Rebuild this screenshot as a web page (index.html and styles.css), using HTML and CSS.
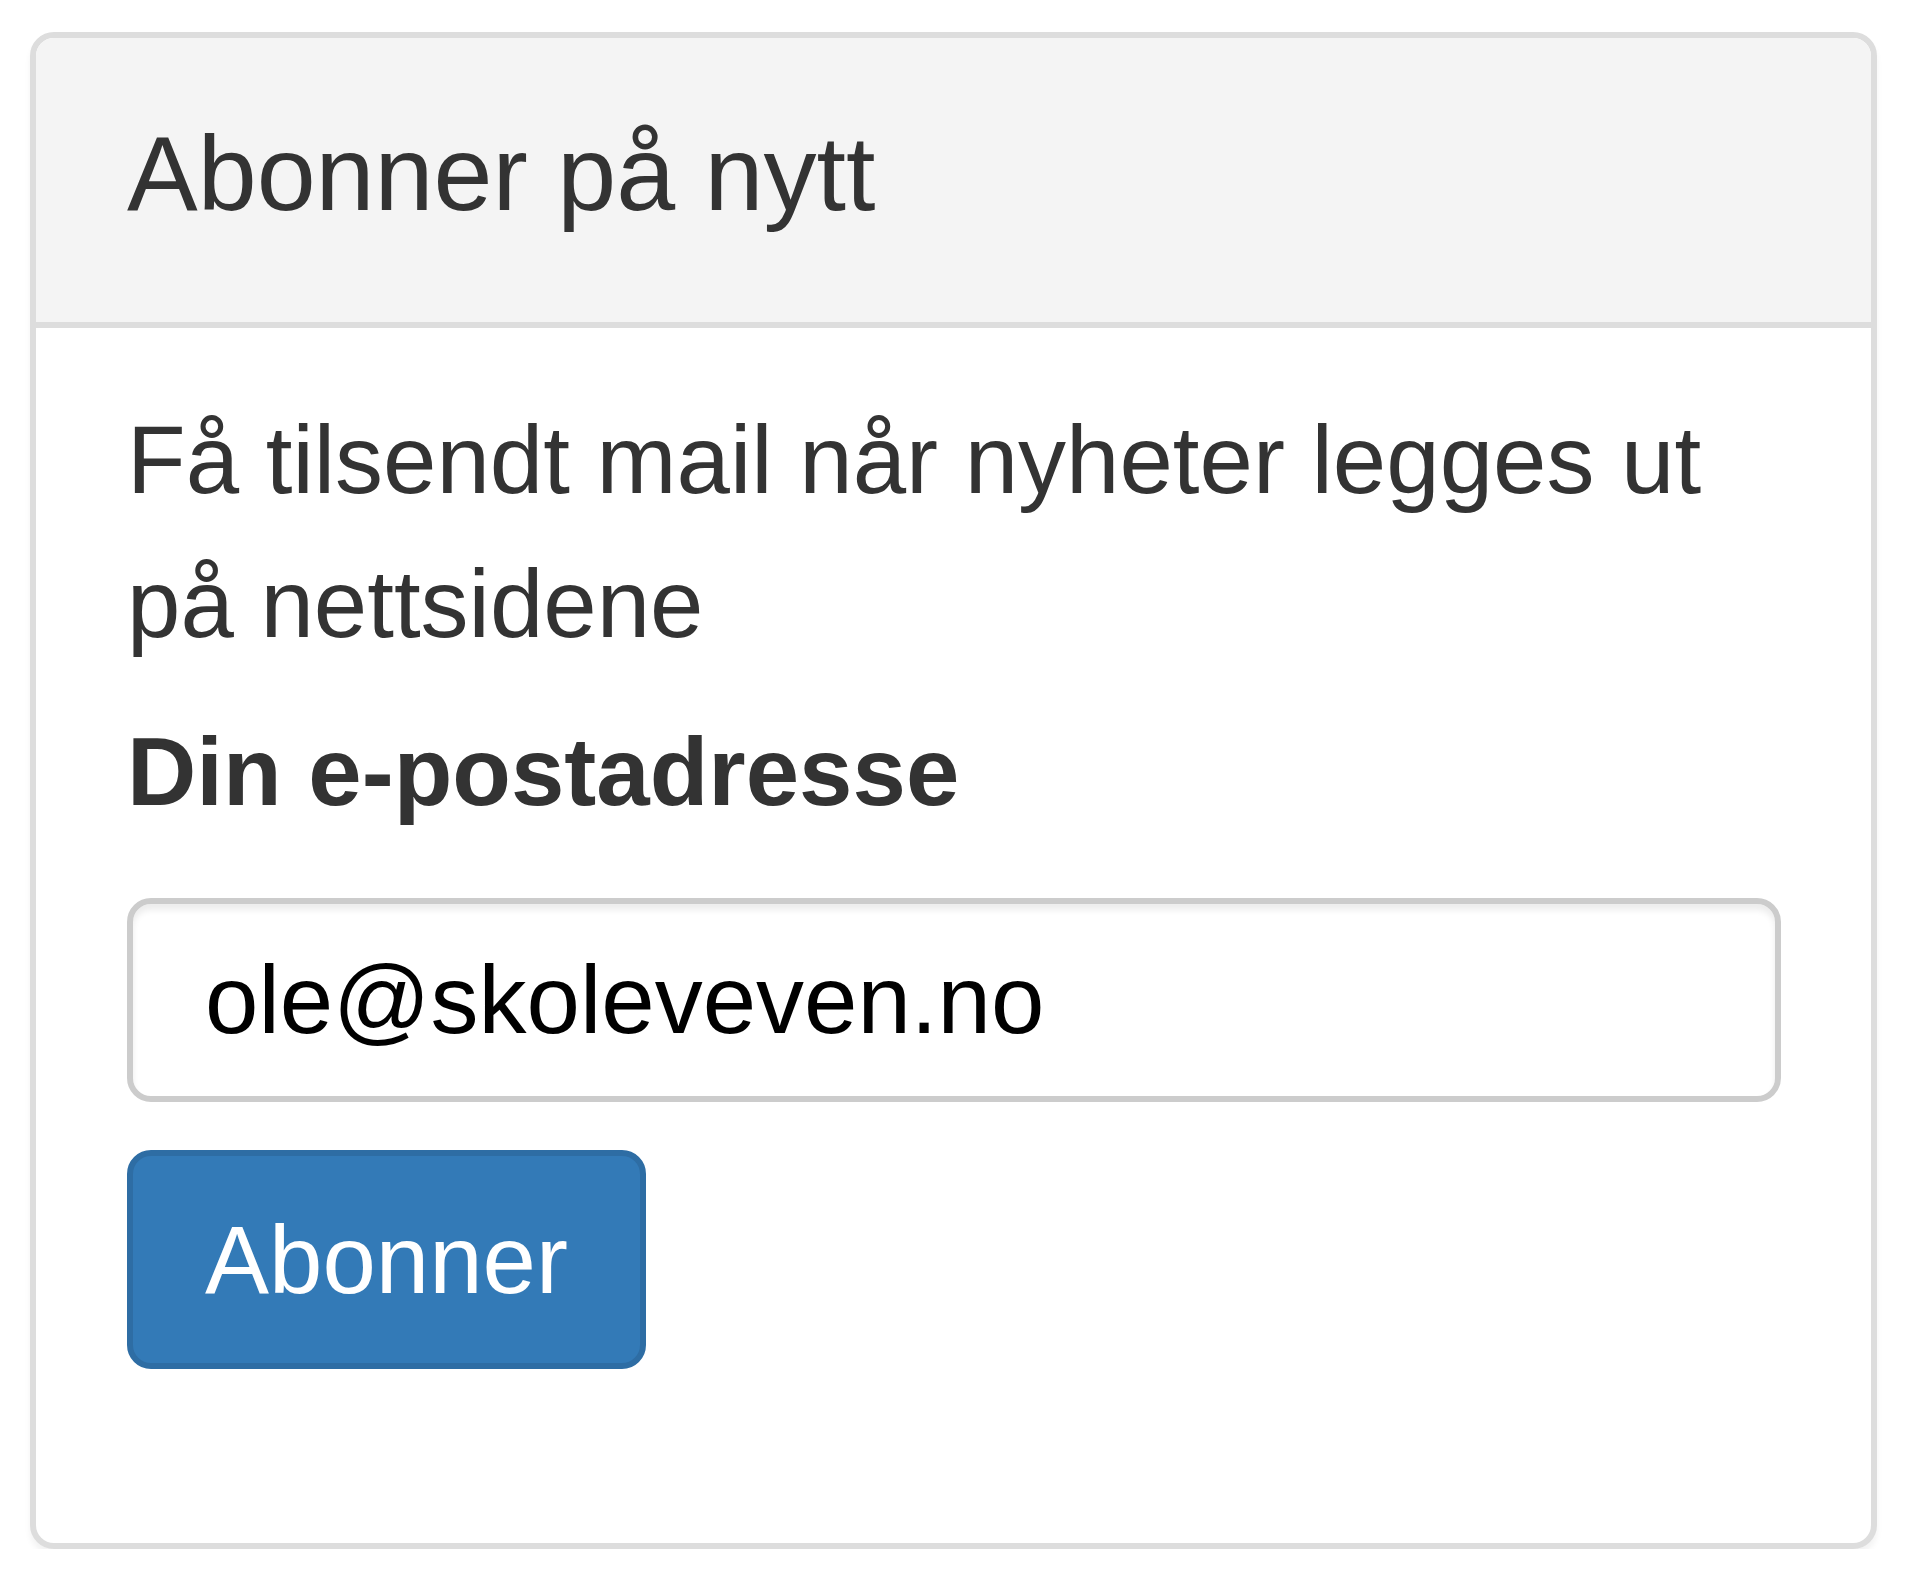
FILE: index.html
```html
<!DOCTYPE html>
<html lang="no">
<head>
<meta charset="utf-8">
<title>Abonner på nytt</title>
<link rel="stylesheet" href="styles.css">
</head>
<body>
<div class="page">
  <div class="panel">
    <div class="panel-heading">
      <h3 class="panel-title">Abonner på nytt</h3>
    </div>
    <div class="panel-body">
      <p class="intro">Få tilsendt mail når nyheter legges ut på nettsidene</p>
      <form class="form">
        <label class="label" for="email">Din e-postadresse</label>
        <input class="form-control" id="email" type="email" value="ole@skoleveven.no">
        <button class="btn" type="button">Abonner</button>
      </form>
    </div>
  </div>
</div>
</body>
</html>
```

FILE: styles.css
```css
html, body {
  margin: 0;
  padding: 0;
  background: #ffffff;
}

body {
  font-family: "Liberation Sans", Arial, Helvetica, sans-serif;
  color: #333333;
}

.page {
  padding: 32px 39px 0 30px;
}

.panel {
  box-sizing: border-box;
  width: 1847px;
  border: 6px solid #dddddd;
  border-radius: 24px;
  background: #ffffff;
  box-shadow: 0 6px 6px rgba(0, 0, 0, 0.05);
}

.panel-heading {
  background: #f4f4f4;
  border-bottom: 6px solid #dddddd;
  border-radius: 18px 18px 0 0;
  padding: 60px 90px 73px 91px;
}

.panel-title {
  margin: 0;
  font-size: 106px;
  font-weight: 400;
  line-height: 151px;
  color: #333333;
}

.panel-body {
  padding: 60px 90px 174px 91px;
}

.intro {
  margin: 0 0 24px 0;
  font-size: 96px;
  line-height: 144px;
}

.form {
  display: flex;
  flex-direction: column;
  align-items: flex-start;
}

.label {
  font-size: 96px;
  font-weight: 700;
  line-height: 144px;
  margin-bottom: 54px;
}

.form-control {
  box-sizing: border-box;
  width: 100%;
  height: 204px;
  margin: 0 0 48px 0;
  padding: 0 72px;
  font-family: "Liberation Sans", Arial, Helvetica, sans-serif;
  font-size: 96px;
  color: #000000;
  background: #ffffff;
  border: 6px solid #cccccc;
  border-radius: 24px;
  box-shadow: inset 0 6px 6px rgba(0, 0, 0, 0.075);
  outline: none;
}

.btn {
  box-sizing: border-box;
  margin: 0;
  padding: 31.5px 72px;
  font-family: "Liberation Sans", Arial, Helvetica, sans-serif;
  font-size: 96px;
  line-height: 144px;
  color: #ffffff;
  background: #337ab7;
  border: 6px solid #2e6da4;
  border-radius: 24px;
  cursor: pointer;
}
```
